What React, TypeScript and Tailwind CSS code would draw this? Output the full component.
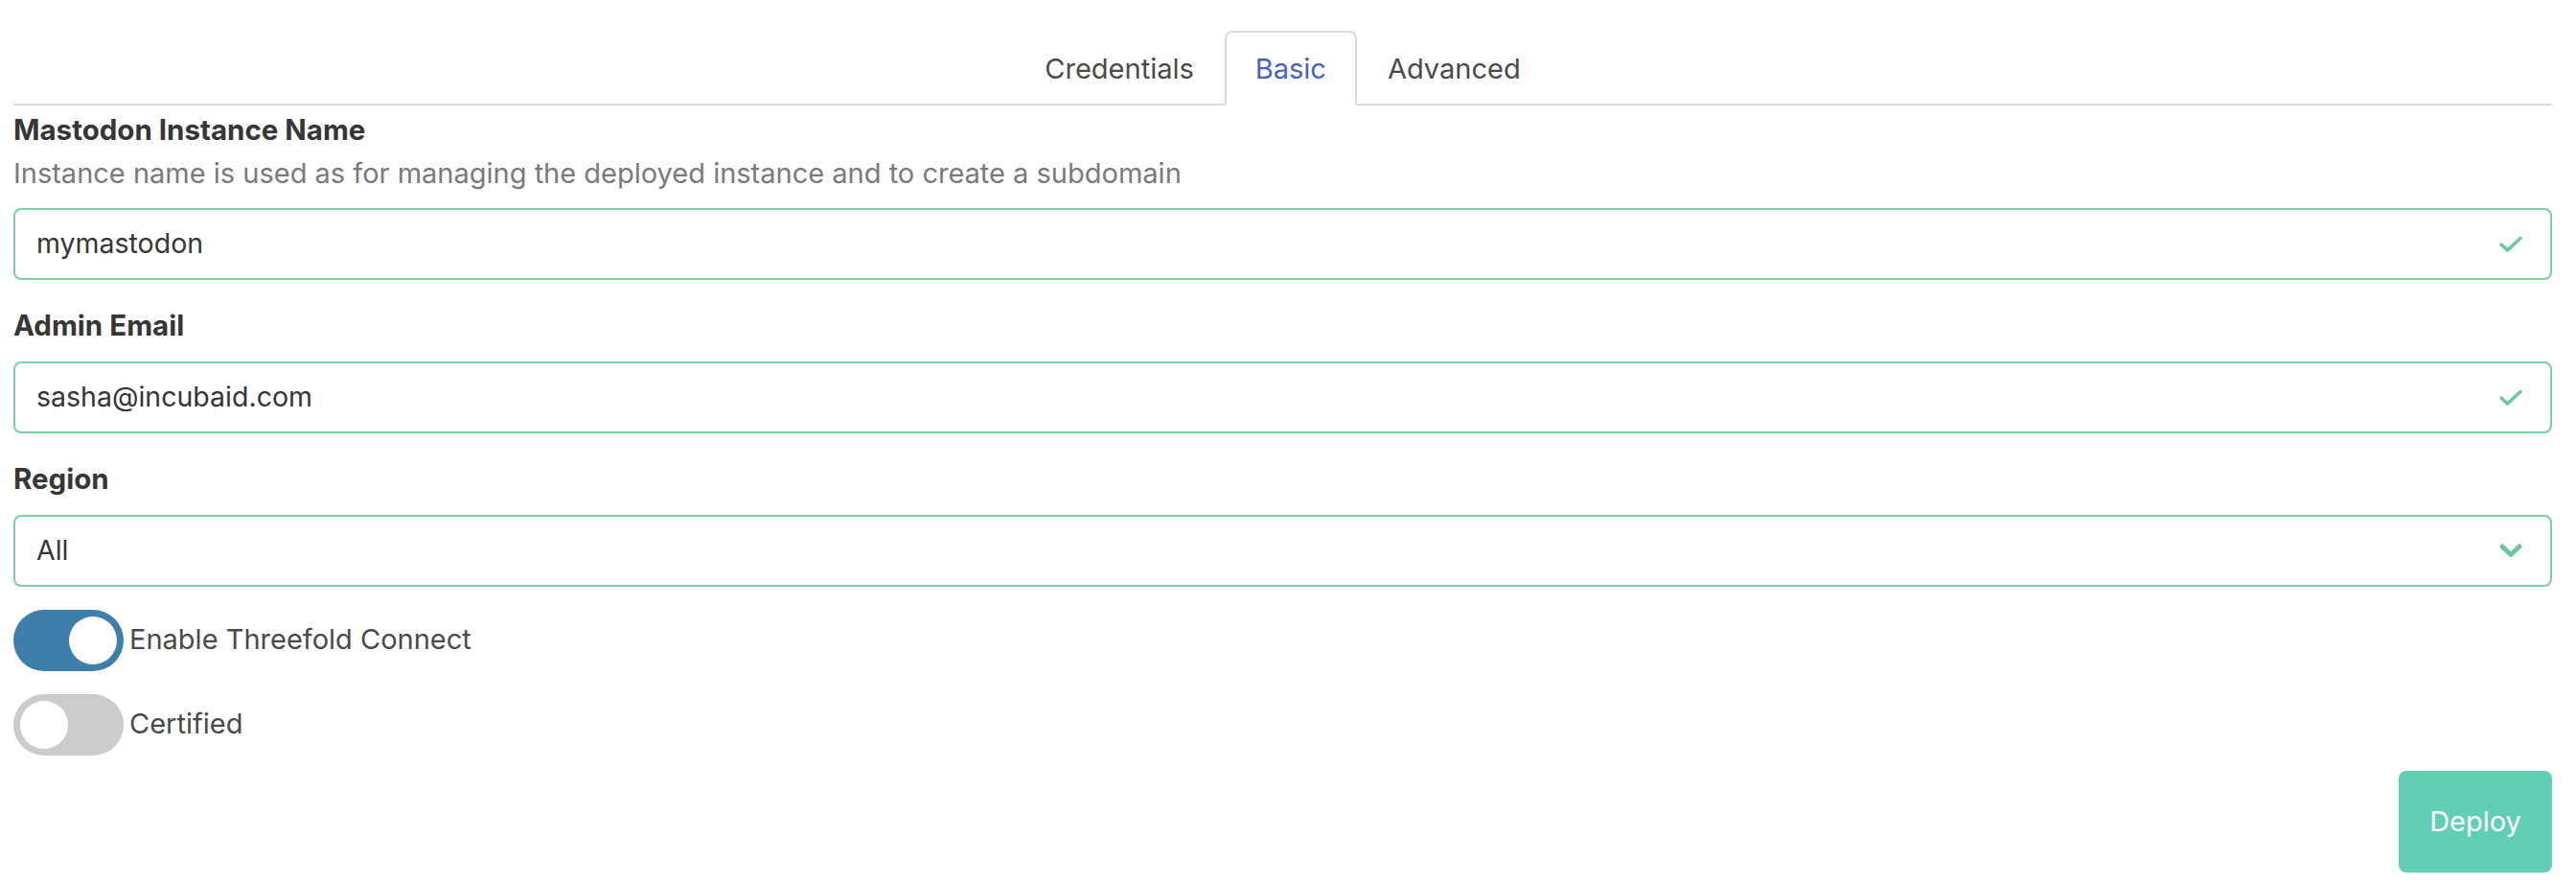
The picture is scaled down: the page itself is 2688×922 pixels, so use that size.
import React, { useState } from 'react';

const font = { fontFamily: 'Inter, Roboto, "Noto Sans", sans-serif' };

const CheckIcon = () => (
  <svg width="26" height="18" viewBox="0 0 26 18" fill="none">
    <polyline points="3,9 9.5,15 23,2.5" stroke="#6cc899" strokeWidth="3.5" strokeLinecap="round" strokeLinejoin="round" />
  </svg>
);

const ChevronIcon = () => (
  <svg width="26" height="18" viewBox="0 0 26 18" fill="none">
    <polyline points="4,4 13,12.5 22,4" stroke="#6cc899" strokeWidth="5" strokeLinecap="round" strokeLinejoin="round" />
  </svg>
);

const Field = ({ label, help, value, select }: { label: string; help?: string; value: string; select?: boolean }) => (
  <div className="flex flex-col">
    <label className="text-[29.5px] font-bold leading-[36px] text-[#363636]">{label}</label>
    {help && <p className="mt-[10px] text-[29px] leading-[36px] text-[#7a7a7a]">{help}</p>}
    <div
      className={`${help ? 'mt-[18px]' : 'mt-[20px]'} flex h-[75px] items-center justify-between rounded-[8px] border-2 border-[#7dd0a2] pl-[22px] pr-[28px]`}
    >
      <span className="text-[28.5px] text-[#363636]">{value}</span>
      {select ? <ChevronIcon /> : <CheckIcon />}
    </div>
  </div>
);

const Toggle = ({ on, label, onClick }: { on: boolean; label: string; onClick: () => void }) => (
  <div className="flex items-center gap-[6px]">
    <button
      type="button"
      onClick={onClick}
      className={`flex h-[64px] w-[115px] items-center rounded-full px-[7px] ${on ? 'justify-end bg-[#3e7eab]' : 'justify-start bg-[#cccccc]'}`}
    >
      <span className="h-[50px] w-[50px] rounded-full bg-white" />
    </button>
    <span className="pb-[2px] text-[29px] text-[#4a4a4a]">{label}</span>
  </div>
);

export default function App() {
  const [tab, setTab] = useState('Basic');
  const [tfConnect, setTfConnect] = useState(true);
  const [certified, setCertified] = useState(false);

  return (
    <div className="min-h-[922px] bg-white pl-[14px] pr-[25px] pt-[32px]" style={font}>
      <div className="flex justify-center border-b-2 border-[#dbdbdb]">
        {['Credentials', 'Basic', 'Advanced'].map((t) => (
          <button
            key={t}
            type="button"
            onClick={() => setTab(t)}
            className={`-mb-[2px] flex h-[78px] items-center rounded-t-[8px] border-2 px-[30px] pt-[2px] text-[29px] ${
              tab === t ? 'border-[#dbdbdb] border-b-white bg-white text-[#485fc7]' : 'border-transparent text-[#4a4a4a]'
            }`}
          >
            {t}
          </button>
        ))}
      </div>

      <div className="mt-[7px] flex flex-col gap-[29px]">
        <Field
          label="Mastodon Instance Name"
          help="Instance name is used as for managing the deployed instance and to create a subdomain"
          value="mymastodon"
        />
        <Field label="Admin Email" value="sasha@incubaid.com" />
        <Field label="Region" value="All" select />
      </div>

      <div className="mt-[24px] flex flex-col gap-[24px]">
        <Toggle on={tfConnect} label="Enable Threefold Connect" onClick={() => setTfConnect(!tfConnect)} />
        <Toggle on={certified} label="Certified" onClick={() => setCertified(!certified)} />
      </div>

      <div className="mt-[16px] flex justify-end">
        <button type="button" className="h-[106px] w-[160px] rounded-[8px] bg-[#62cfb4] text-[29px] text-white">
          Deploy
        </button>
      </div>
    </div>
  );
}
